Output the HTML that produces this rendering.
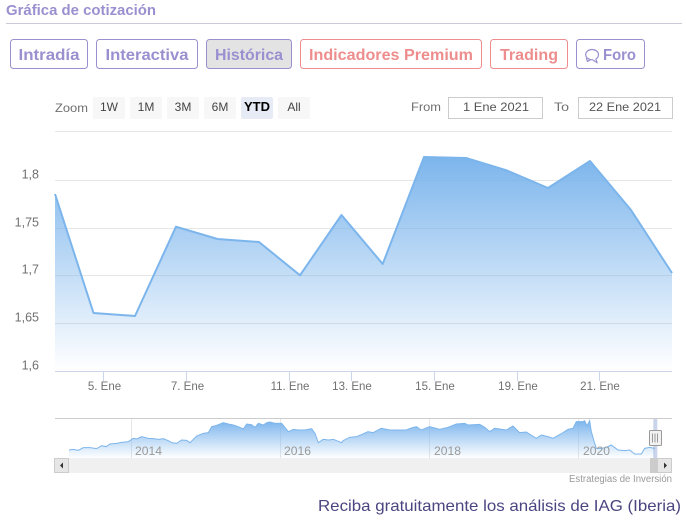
<!DOCTYPE html>
<html lang="es">
<head>
<meta charset="utf-8">
<title>Gráfica de cotización</title>
<style>
html,body{margin:0;padding:0;background:#fff;width:686px;height:522px;overflow:hidden}
svg{display:block}
text{font-family:"Liberation Sans",sans-serif}
.h{font-weight:bold;font-size:16px}
.p{fill:#9a90cf}
.s{fill:#ee8d8d}
.c{font-size:12px;fill:#707070}
.b{font-size:12px;fill:#444;text-anchor:middle}
.x{font-size:11.5px;fill:#707070;text-anchor:middle}
.y{font-size:12.5px;fill:#707070;text-anchor:end}
.n{font-size:12px;fill:#999}
.g{stroke:#e6e6e6;stroke-width:1}
.t{stroke:#ccd6eb;stroke-width:1}
</style>
</head>
<body>
<svg width="686" height="522" viewBox="0 0 686 522" xmlns="http://www.w3.org/2000/svg">
<defs>
<linearGradient id="a" gradientUnits="userSpaceOnUse" x1="0" y1="157" x2="0" y2="371">
<stop offset="0" stop-color="#7cb5ec"/><stop offset="1" stop-color="#7cb5ec" stop-opacity="0"/>
</linearGradient>
<linearGradient id="m" gradientUnits="userSpaceOnUse" x1="0" y1="62" x2="0" y2="175">
<stop offset="0" stop-color="#7cb5ec"/><stop offset="1" stop-color="#7cb5ec" stop-opacity="0"/>
</linearGradient>
</defs>

<text x="6" y="15" font-size="15" font-weight="bold" class="p" textLength="150" lengthAdjust="spacingAndGlyphs">Gráfica de cotización</text>
<line x1="6" y1="23.5" x2="682" y2="23.5" stroke="#cbc8d8"/>

<g fill="#fff" stroke-width="1">
<rect x="10.5" y="39.5" width="77" height="29" rx="3" stroke="#9a90cf"/>
<rect x="96.5" y="39.5" width="101" height="29" rx="3" stroke="#9a90cf"/>
<rect x="206.5" y="39.5" width="85" height="29" rx="3" stroke="#9a90cf" fill="#e3e3e3"/>
<rect x="300.5" y="39.5" width="181" height="29" rx="3" stroke="#ee8d8d"/>
<rect x="490.5" y="39.5" width="77" height="29" rx="3" stroke="#ee8d8d"/>
<rect x="576.5" y="39.5" width="68" height="29" rx="3" stroke="#9a90cf"/>
</g>
<text x="18.5" y="60" class="h p" textLength="61" lengthAdjust="spacingAndGlyphs">Intradía</text>
<text x="105.5" y="60" class="h p" textLength="83" lengthAdjust="spacingAndGlyphs">Interactiva</text>
<text x="215" y="60" class="h p" textLength="68" lengthAdjust="spacingAndGlyphs">Histórica</text>
<text x="309" y="60" class="h s" textLength="164" lengthAdjust="spacingAndGlyphs">Indicadores Premium</text>
<text x="500" y="60" class="h s" textLength="58" lengthAdjust="spacingAndGlyphs">Trading</text>
<text x="603" y="60" class="h p" textLength="33" lengthAdjust="spacingAndGlyphs">Foro</text>
<g fill="none" stroke="#9a90cf" stroke-width="1.2" stroke-linejoin="round" stroke-linecap="round">
<path d="M592 49.500c3.600 0 6.500 2.300 6.500 5.300 0 1.900-1.100 3.400-2.700 4.300l1.400 3.700-4.600-3c-3.800 0-6.900-2.300-6.900-5 0-3 2.900-5.300 6.300-5.300z"/>
<path d="M586.500 58.500l1 3 3-1.800"/>
</g>

<text x="55" y="112" class="c" textLength="33" lengthAdjust="spacingAndGlyphs">Zoom</text>
<g fill="#f7f7f7">
<rect x="93" y="97" width="32" height="22" rx="2"/>
<rect x="130" y="97" width="32" height="22" rx="2"/>
<rect x="167" y="97" width="32" height="22" rx="2"/>
<rect x="204" y="97" width="32" height="22" rx="2"/>
<rect x="241" y="97" width="32" height="22" rx="2" fill="#e6ebf5"/>
<rect x="278" y="97" width="32" height="22" rx="2"/>
</g>
<text x="109" y="111" class="b">1W</text>
<text x="146" y="111" class="b">1M</text>
<text x="183" y="111" class="b">3M</text>
<text x="220" y="111" class="b">6M</text>
<text x="257" y="111" class="b" font-weight="bold" style="font-size:13px;fill:#000">YTD</text>
<text x="294" y="111" class="b">All</text>

<text x="411" y="111" class="c" textLength="30" lengthAdjust="spacingAndGlyphs">From</text>
<rect x="448.500" y="97.500" width="94" height="21" fill="#fff" stroke="#ccc"/>
<text x="463" y="111" class="c" style="fill:#555" textLength="66" lengthAdjust="spacingAndGlyphs">1 Ene 2021</text>
<text x="554" y="111" class="c" textLength="15" lengthAdjust="spacingAndGlyphs">To</text>
<rect x="578.500" y="97.500" width="94" height="21" fill="#fff" stroke="#ccc"/>
<text x="589" y="111" class="c" style="fill:#555" textLength="72" lengthAdjust="spacingAndGlyphs">22 Ene 2021</text>

<!-- main chart grid -->
<line class="g" x1="55" x2="672" y1="131.500" y2="131.500"/>
<line class="g" x1="55" x2="672" y1="180.500" y2="180.500"/>
<line class="g" x1="55" x2="672" y1="228.500" y2="228.500"/>
<line class="g" x1="55" x2="672" y1="275.500" y2="275.500"/>
<line class="g" x1="55" x2="672" y1="323.500" y2="323.500"/>
<line class="t" x1="55" x2="672" y1="371.500" y2="371.500"/>
<path d="M55 194L93.500 313L135 316L176 226.700L217.500 239L259 242L300 275.300L341.500 215L382.700 264L424 157L466 158L507 170.500L548 188L590 161L631 210L672 273L672 371L55 371Z" fill="url(#a)"/>
<path d="M55 194L93.500 313L135 316L176 226.700L217.500 239L259 242L300 275.300L341.500 215L382.700 264L424 157L466 158L507 170.500L548 188L590 161L631 210L672 273" fill="none" stroke="#7cb5ec" stroke-width="2" stroke-linejoin="round"/>

<g>
<line class="t" x1="103.500" x2="103.500" y1="372" y2="381"/>
<line class="t" x1="186.500" x2="186.500" y1="372" y2="381"/>
<line class="t" x1="289.500" x2="289.500" y1="372" y2="381"/>
<line class="t" x1="351.500" x2="351.500" y1="372" y2="381"/>
<line class="t" x1="434.500" x2="434.500" y1="372" y2="381"/>
<line class="t" x1="517.500" x2="517.500" y1="372" y2="381"/>
<line class="t" x1="599.500" x2="599.500" y1="372" y2="381"/>
</g>
<text x="104.500" y="390" class="x">5. Ene</text>
<text x="187.500" y="390" class="x">7. Ene</text>
<text x="290" y="390" class="x">11. Ene</text>
<text x="352" y="390" class="x">13. Ene</text>
<text x="435" y="390" class="x">15. Ene</text>
<text x="518" y="390" class="x">19. Ene</text>
<text x="600" y="390" class="x">21. Ene</text>

<text x="39" y="178.500" class="y">1,8</text>
<text x="39" y="226.500" class="y">1,75</text>
<text x="39" y="273.500" class="y">1,7</text>
<text x="39" y="321.500" class="y">1,65</text>
<text x="39" y="369.500" class="y">1,6</text>

<!-- navigator -->
<line x1="55" x2="672" y1="418.500" y2="418.500" stroke="#ccc"/>
<g stroke="#e6e6e6">
<line x1="131.500" x2="131.500" y1="419" y2="458"/>
<line x1="280.500" x2="280.500" y1="419" y2="458"/>
<line x1="429.500" x2="429.500" y1="419" y2="458"/>
<line x1="578.500" x2="578.500" y1="419" y2="458"/>
</g>
<g transform="translate(0,400) scale(0.33333)">
<path d="M207 150L220 148L235 151L250 143L270 143L290 146L305 137L318 140L330 132L350 130L365 127L385 125L400 115L410 117L425 110L445 115L460 116L475 118L490 116L505 122L515 128L530 130L545 120L560 121L570 128L590 108L610 100L625 98L635 80L650 76L670 68L685 72L700 75L715 80L730 87L740 72L755 74L765 82L775 70L790 75L800 68L810 66L825 70L845 70L865 95L880 88L895 90L915 90L935 86L945 100L955 128L970 118L985 120L1000 118L1015 124L1025 128L1029 122L1029 175L207 175Z" fill="url(#m)"/>
<path d="M207 150L220 148L235 151L250 143L270 143L290 146L305 137L318 140L330 132L350 130L365 127L385 125L400 115L410 117L425 110L445 115L460 116L475 118L490 116L505 122L515 128L530 130L545 120L560 121L570 128L590 108L610 100L625 98L635 80L650 76L670 68L685 72L700 75L715 80L730 87L740 72L755 74L765 82L775 70L790 75L800 68L810 66L825 70L845 70L865 95L880 88L895 90L915 90L935 86L945 100L955 128L970 118L985 120L1000 118L1015 124L1025 128L1029 122" fill="none" stroke="#7cb5ec" stroke-width="3"/>
</g>
<g transform="translate(343,400) scale(0.33333)">
<path d="M0 122L20 112L40 110L60 102L75 95L90 98L115 85L140 90L165 90L190 90L205 84L220 80L235 90L260 80L290 88L315 82L340 72L365 70L375 75L410 73L425 82L440 95L455 85L490 90L510 78L530 98L550 96L565 106L580 115L595 105L615 110L630 115L660 98L675 88L690 85L700 65L720 65L725 62L732 78L740 62L745 95L755 130L760 145L775 145L790 142L805 135L825 150L845 152L860 150L875 162L895 162L905 145L920 142L935 145L935 175L0 175Z" fill="url(#m)"/>
<path d="M0 122L20 112L40 110L60 102L75 95L90 98L115 85L140 90L165 90L190 90L205 84L220 80L235 90L260 80L290 88L315 82L340 72L365 70L375 75L410 73L425 82L440 95L455 85L490 90L510 78L530 98L550 96L565 106L580 115L595 105L615 110L630 115L660 98L675 88L690 85L700 65L720 65L725 62L732 78L740 62L745 95L755 130L760 145L775 145L790 142L805 135L825 150L845 152L860 150L875 162L895 162L905 145L920 142L935 145" fill="none" stroke="#7cb5ec" stroke-width="3"/>
</g>
<text x="135" y="455" class="n" textLength="27" lengthAdjust="spacingAndGlyphs">2014</text>
<text x="284" y="455" class="n" textLength="27" lengthAdjust="spacingAndGlyphs">2016</text>
<text x="434" y="455" class="n" textLength="27" lengthAdjust="spacingAndGlyphs">2018</text>
<text x="583" y="455" class="n" textLength="27" lengthAdjust="spacingAndGlyphs">2020</text>

<!-- scrollbar -->
<rect x="54" y="458" width="618" height="15" fill="#f0f0f0"/>
<rect x="650" y="458" width="8" height="15" fill="#ccc"/>
<rect x="54.500" y="458.500" width="14" height="14" fill="#e6e6e6" stroke="#ccc"/>
<rect x="657.500" y="458.500" width="14" height="14" fill="#e6e6e6" stroke="#ccc"/>
<path d="M60 465.500L63 462.500V468.500Z" fill="#333"/>
<path d="M667 465.500L664 462.500V468.500Z" fill="#333"/>

<rect x="653.300" y="419" width="4" height="39" fill="#6685c2" opacity=".35"/>
<rect x="649.500" y="430.500" width="12" height="15" rx="1" fill="#f2f2f2" stroke="#999"/>
<path d="M652.500 433.500v9M655 433.500v9M657.500 433.500v9" stroke="#999" fill="none"/>

<text x="672" y="482" font-size="10" fill="#999" text-anchor="end" textLength="103" lengthAdjust="spacingAndGlyphs">Estrategias de Inversión</text>

<text x="318" y="511" font-size="16" fill="#4a4580" textLength="363" lengthAdjust="spacingAndGlyphs">Reciba gratuitamente los análisis de IAG (Iberia)</text>
</svg>
</body>
</html>
